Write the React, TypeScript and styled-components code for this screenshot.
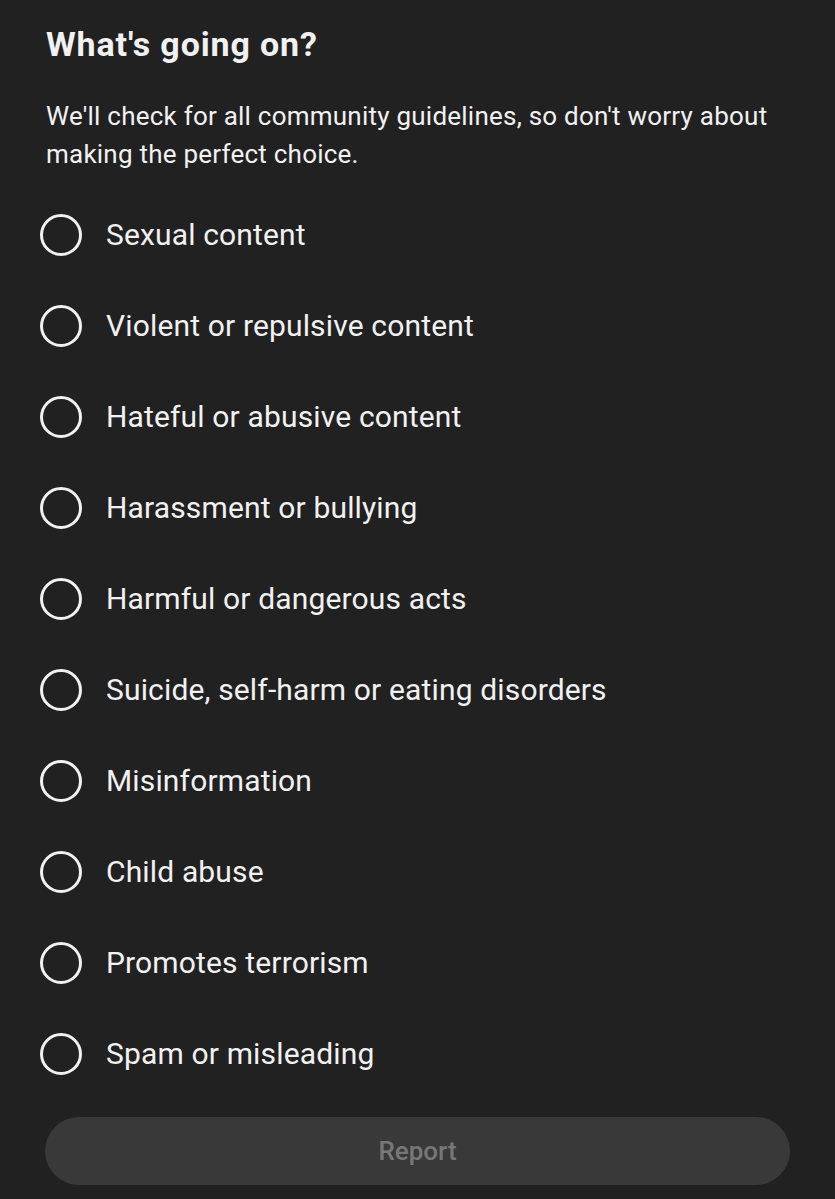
import React, { useState } from "react";
import styled, { createGlobalStyle } from "styled-components";

const GlobalStyle = createGlobalStyle`
  html, body {
    margin: 0;
    padding: 0;
    background: #212121;
  }
  body {
    font-family: Roboto, "Noto Sans", "Liberation Sans", sans-serif;
    color: #f1f1f1;
  }
`;

const reasons = [
  "Sexual content",
  "Violent or repulsive content",
  "Hateful or abusive content",
  "Harassment or bullying",
  "Harmful or dangerous acts",
  "Suicide, self-harm or eating disorders",
  "Misinformation",
  "Child abuse",
  "Promotes terrorism",
  "Spam or misleading",
];

const Sheet = styled.div`
  min-height: 1199px;
  box-sizing: border-box;
  padding: 22px 45px 0 46px;
  background: #212121;
`;

const Title = styled.h1`
  margin: 0;
  font-size: 34px;
  line-height: 44px;
  letter-spacing: 0.85px;
  font-weight: 700;
  color: #f1f1f1;
`;

const Description = styled.p`
  margin: 31px 0 0;
  font-size: 26px;
  line-height: 38px;
  letter-spacing: 0.23px;
  font-weight: 400;
  color: #f1f1f1;
`;

const Options = styled.div`
  display: flex;
  flex-direction: column;
  margin: 16px 0 0 -6px;
`;

const Option = styled.label`
  display: flex;
  align-items: center;
  height: 91px;
  gap: 24px;
  cursor: pointer;
`;

const Radio = styled.span<{ $checked: boolean }>`
  flex: none;
  width: 42px;
  height: 42px;
  box-sizing: border-box;
  border: 3.5px solid #f1f1f1;
  border-radius: 50%;
  display: flex;
  align-items: center;
  justify-content: center;

  &::after {
    content: "";
    width: 20px;
    height: 20px;
    border-radius: 50%;
    background: #f1f1f1;
    display: ${(props) => (props.$checked ? "block" : "none")};
  }
`;

const OptionText = styled.span`
  font-size: 30px;
  font-weight: 400;
  letter-spacing: 0.15px;
  color: #f1f1f1;
`;

const ReportButton = styled.button<{ $enabled: boolean }>`
  display: block;
  width: 745px;
  height: 68px;
  margin: 18px 0 0 -1px;
  border: none;
  border-radius: 34px;
  background: ${(props) => (props.$enabled ? "#f1f1f1" : "#393939")};
  color: ${(props) => (props.$enabled ? "#0f0f0f" : "#777777")};
  font-family: inherit;
  font-size: 26px;
  font-weight: 500;
`;

export default function App() {
  const [selected, setSelected] = useState<number | null>(null);

  return (
    <>
      <GlobalStyle />
      <Sheet>
        <Title>What's going on?</Title>
        <Description>
          We'll check for all community guidelines, so don't worry about
          making the perfect choice.
        </Description>
        <Options>
          {reasons.map((reason, i) => (
            <Option key={reason} onClick={() => setSelected(i)}>
              <Radio $checked={selected === i} />
              <OptionText>{reason}</OptionText>
            </Option>
          ))}
        </Options>
        <ReportButton $enabled={selected !== null}>Report</ReportButton>
      </Sheet>
    </>
  );
}
